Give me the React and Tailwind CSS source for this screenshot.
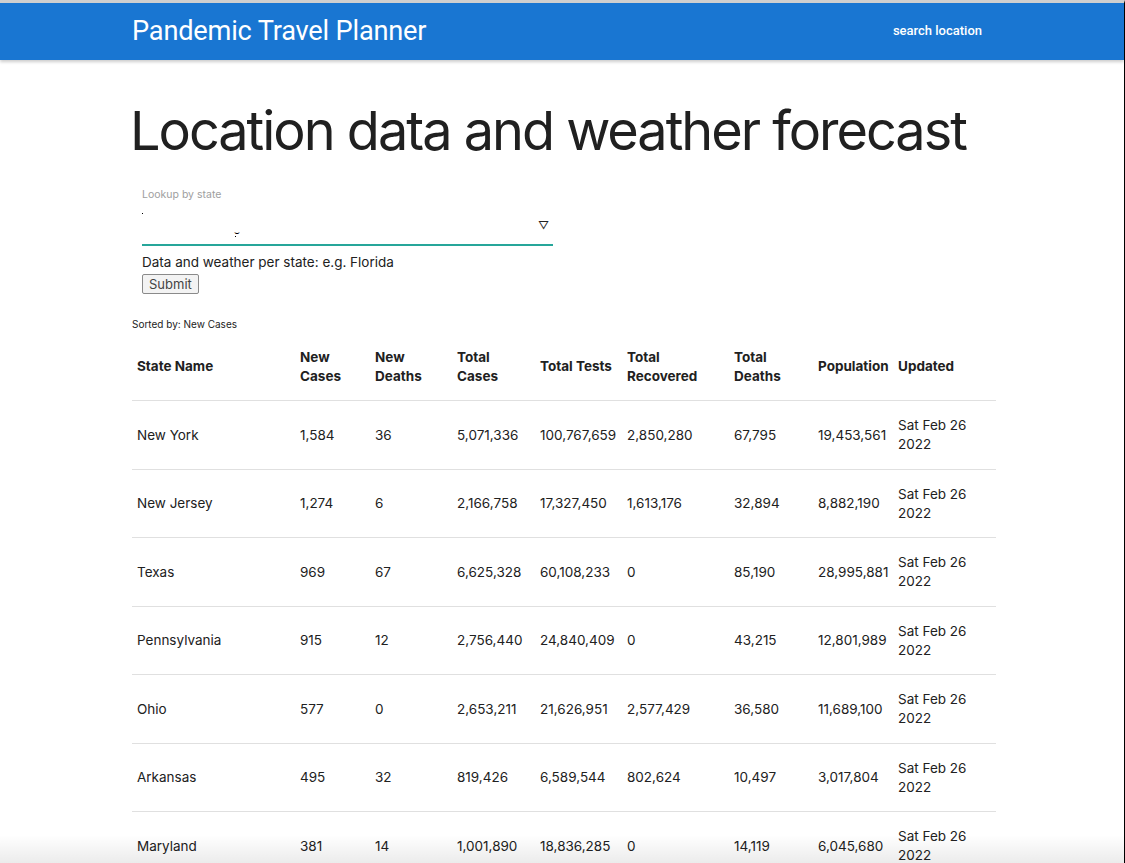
import React from 'react';

const rows = [
  ['New York', '1,584', '36', '5,071,336', '100,767,659', '2,850,280', '67,795', '19,453,561'],
  ['New Jersey', '1,274', '6', '2,166,758', '17,327,450', '1,613,176', '32,894', '8,882,190'],
  ['Texas', '969', '67', '6,625,328', '60,108,233', '0', '85,190', '28,995,881'],
  ['Pennsylvania', '915', '12', '2,756,440', '24,840,409', '0', '43,215', '12,801,989'],
  ['Ohio', '577', '0', '2,653,211', '21,626,951', '2,577,429', '36,580', '11,689,100'],
  ['Arkansas', '495', '32', '819,426', '6,589,544', '802,624', '10,497', '3,017,804'],
  ['Maryland', '381', '14', '1,001,890', '18,836,285', '0', '14,119', '6,045,680'],
];

const headers = [
  ['State Name'],
  ['New', 'Cases'],
  ['New', 'Deaths'],
  ['Total', 'Cases'],
  ['Total Tests'],
  ['Total', 'Recovered'],
  ['Total', 'Deaths'],
  ['Population'],
  ['Updated'],
];

const colWidths = ['w-[163px]', 'w-[75px]', 'w-[82px]', 'w-[83px]', 'w-[87px]', 'w-[107px]', 'w-[84px]', 'w-[80px]', 'w-[103px]'];

export default function App() {
  return (
    <div className="relative h-[863px] bg-white border-t-[3px] border-[#cfcfcf] border-r border-r-black overflow-hidden text-[#212121]" style={{ fontFamily: 'Inter, "Noto Sans", sans-serif' }}>
      <nav className="h-[57px] bg-[#1976d2] shadow-[0_2px_3px_rgba(0,0,0,0.2)]">
        <div className="w-[864px] ml-[132px] h-full flex items-center justify-between pr-[14px]">
          <a className="text-white text-[27.2px] tracking-[-0.2px] leading-none" style={{ fontFamily: 'Roboto, sans-serif' }}>Pandemic Travel Planner</a>
          <a className="text-white text-[13px] font-medium -mt-[2px]" style={{ fontFamily: 'Roboto, sans-serif' }}>search location</a>
        </div>
      </nav>

      <main className="w-[864px] ml-[132px]">
        <h1 className="text-[54px] font-normal tracking-[-2px] leading-none mt-[44px] -ml-[2px] whitespace-nowrap text-[#202020]">Location data and weather forecast</h1>

        <div className="ml-[10px] w-[411px] mt-[29px]">
          <label className="block text-[10.5px] text-[#9e9e9e]">Lookup by state</label>
          <div className="relative h-[37px] mt-[6px] border-b-2 border-[#26a69a]">
            <span className="absolute left-0 top-[4px] w-[1px] h-[1px] bg-black"></span>
            <span className="absolute left-[92px] top-[18px] text-[9px] leading-none text-black">⌣</span>
            <span className="absolute left-[93px] top-[27px] w-[1px] h-[1px] bg-black"></span>
            <span className="absolute right-[4px] top-[11px] text-[11px] leading-none text-[#222]">▽</span>
          </div>
          <p className="text-[13.5px] mt-[7px] leading-[18px]">Data and weather per state: e.g. Florida</p>
          <button className="mt-[1px] px-[6px] h-[20px] text-[13px] leading-none text-[#444] bg-[#f3f3f3] border border-[#8a8a8a] rounded-[2px]">Submit</button>
        </div>

        <p className="text-[10px] mt-[22px] text-[#222]">Sorted by: New Cases</p>

        <table className="table-fixed w-[864px] mt-[1px] border-collapse text-[13.5px]">
          <colgroup>
            {colWidths.map((w, i) => (
              <col key={i} className={w} />
            ))}
          </colgroup>
          <thead>
            <tr className="border-b border-[#e0e0e0]">
              {headers.map((h, i) => (
                <th key={i} className="text-left font-bold px-[5px] py-[14.75px] leading-[19px] align-middle">
                  {h.map((line, j) => (
                    <div key={j}>{line}</div>
                  ))}
                </th>
              ))}
            </tr>
          </thead>
          <tbody>
            {rows.map((r, i) => (
              <tr key={i} className="border-b border-[#e0e0e0]">
                {r.map((c, j) => (
                  <td key={j} className="px-[5px] py-[14.75px] leading-[19px] align-middle whitespace-nowrap">{c}</td>
                ))}
                <td className="px-[5px] py-[14.75px] leading-[19px] align-middle">
                  <div>Sat Feb 26</div>
                  <div>2022</div>
                </td>
              </tr>
            ))}
          </tbody>
        </table>
      </main>

      <div className="absolute left-0 right-0 bottom-0 h-[28px] bg-gradient-to-t from-[rgba(0,0,0,0.08)] to-transparent pointer-events-none"></div>
    </div>
  );
}
